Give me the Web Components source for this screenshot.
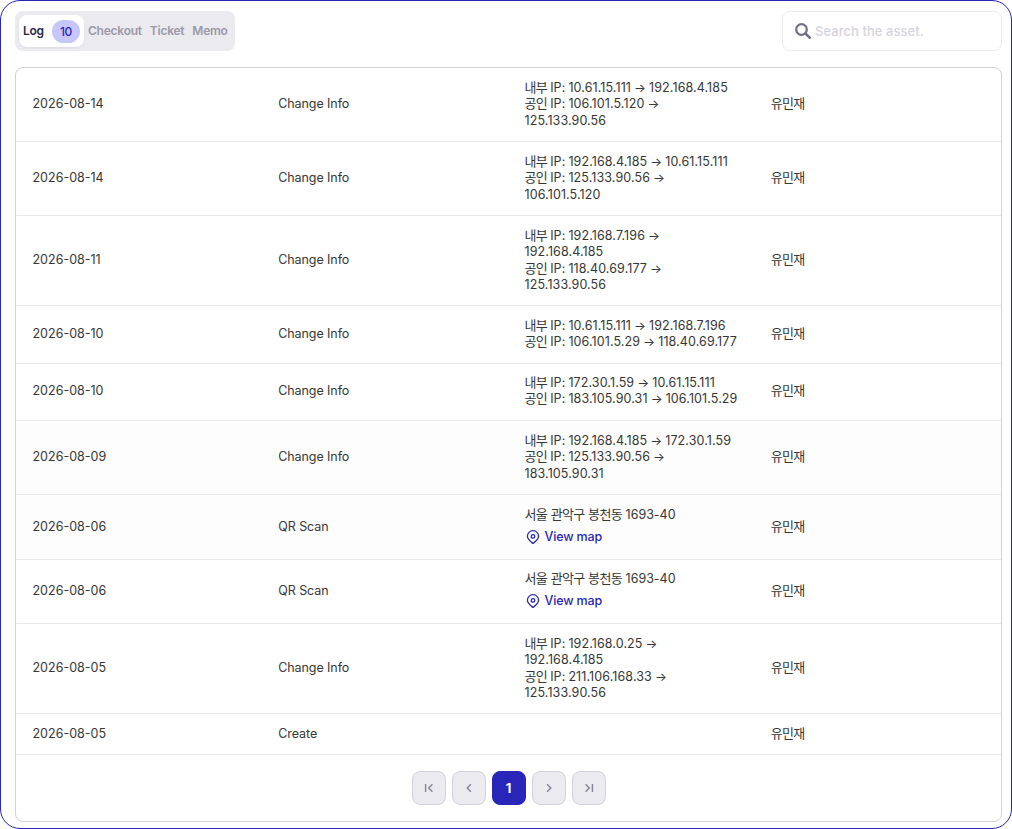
<!DOCTYPE html>
<html lang="en">
<head>
<meta charset="utf-8">
<title>Asset log</title>
<style>
	:root{
		--primary:#2925b8;
		--panel:#ebeaef;
		--border:#d1d1d6;
		--row-border:#e9e9ec;
		--text:#363636;
		--muted:#9b98aa;
		--icon:#706e88;
	}
	html, body{
		height:100%;
		margin:0;
		background:#fff;
	}
	body{
		font-family:Inter, "Noto Sans CJK KR", sans-serif;
		font-size:12.5px;
		line-height:16.25px;
		color:var(--text);
	}
</style>
</head>
<body>

<asset-panel>
	<tab-bar slot="left">
		<tab-item active count="10">Log</tab-item>
		<tab-item>Checkout</tab-item>
		<tab-item>Ticket</tab-item>
		<tab-item>Memo</tab-item>
	</tab-bar>
	<search-box slot="right" placeholder="Search the asset."></search-box>
	<log-table></log-table>
</asset-panel>

<script>

//component asset-panel
window.customElements.define('asset-panel',
	class extends HTMLElement {
		template() {
			return `
			<style>
				:host{
					display:flex;
					flex-direction:column;
					gap:16px;
					box-sizing:border-box;
					height:829px;
					padding:10px 9px 6px 14px;
					border:1px solid var(--primary);
					border-radius:20px;
				}
				.head{
					display:flex;
					justify-content:space-between;
					height:40px;
				}
				::slotted(log-table){
					flex:1;
				}
			</style>
			<div class="head">
				<slot name="left"></slot>
				<slot name="right"></slot>
			</div>
			<slot></slot>
			`
		}

		constructor() {
			super()
			this.attachShadow({ mode: "open" })
			this.shadowRoot.innerHTML = this.template()
		}
	}
)

//component tab-bar
window.customElements.define('tab-bar',
	class extends HTMLElement {
		template() {
			return `
			<style>
				:host{
					display:flex;
					box-sizing:border-box;
					width:220px;
					height:40px;
					padding:4px;
					border-radius:8px;
					background:var(--panel);
				}
			</style>
			<slot></slot>
			`
		}

		constructor() {
			super()
			this.attachShadow({ mode: "open" })
			this.shadowRoot.innerHTML = this.template()
		}
	}
)

//component tab-item
window.customElements.define('tab-item',
	class extends HTMLElement {
		template() {
			return `
			<style>
				:host{
					display:flex;
					flex:none;
					align-items:center;
					justify-content:space-between;
					box-sizing:border-box;
					height:32px;
					padding:0 4px;
					border-radius:8px;
					color:var(--muted);
					font-size:12px;
					font-weight:600;
					letter-spacing:-.24px;
					white-space:nowrap;
				}
				:host([active]){
					width:65px;
					color:#29274a;
					background:#fff;
					box-shadow:0 1px 2px rgba(40,38,80,.08);
				}
				.count{
					width:28px;
					height:23px;
					border-radius:12px;
					background:#c7c6fa;
					color:var(--primary);
					font-weight:500;
					line-height:23px;
					text-align:center;
				}
			</style>
			<slot></slot>
			${this.hasAttribute('count') ? `<span class="count">${this.getAttribute('count')}</span>` : ''}
			`
		}

		constructor() {
			super()
			this.attachShadow({ mode: "open" })
			this.shadowRoot.innerHTML = this.template()
		}
	}
)

//component search-box
window.customElements.define('search-box',
	class extends HTMLElement {
		template() {
			return `
			<style>
				:host{
					display:flex;
					align-items:center;
					gap:4px;
					box-sizing:border-box;
					width:220px;
					height:40px;
					padding:0 12px;
					border:1px solid var(--panel);
					border-radius:8px;
					color:#d5d3dc;
					font-size:13px;
					font-weight:500;
					letter-spacing:.05px;
				}
				svg{
					flex:none;
					width:16px;
					height:16px;
					fill:none;
					stroke:var(--icon);
				}
			</style>
			<svg viewBox="0 0 16 16">
				<circle cx="6.5" cy="6.5" r="5.3" stroke-width="2.2"/>
				<path d="M10.6 10.6L14.7 14.7" stroke-width="2.6" stroke-linecap="round"/>
			</svg>
			<span class="text">${this.getAttribute('placeholder')}</span>
			`
		}

		constructor() {
			super()
			this.attachShadow({ mode: "open" })
			this.shadowRoot.innerHTML = this.template()
		}
	}
)

//component map-link
window.customElements.define('map-link',
	class extends HTMLElement {
		template() {
			return `
			<style>
				:host{
					display:flex;
					align-items:center;
					gap:4px;
					height:19.25px;
					margin-top:4px;
					color:var(--primary);
					font-weight:500;
					letter-spacing:-.15px;
				}
				svg{
					width:16px;
					height:16px;
					fill:none;
					stroke:currentColor;
					stroke-width:1.3;
					stroke-linejoin:round;
				}
			</style>
			<svg viewBox="0 0 16 16">
				<path d="M8 14.4C6.2 12.9 2.4 10.6 2.4 7.3A5.6 5.6 0 0 1 13.6 7.3C13.6 10.6 9.8 12.9 8 14.4Z"/>
				<circle cx="8" cy="7.4" r="1.8"/>
			</svg>
			<slot></slot>
			`
		}

		constructor() {
			super()
			this.attachShadow({ mode: "open" })
			this.shadowRoot.innerHTML = this.template()
		}
	}
)

//component log-row
window.customElements.define('log-row',
	class extends HTMLElement {
		template() {
			return `
			<style>
				:host{
					display:grid;
					grid-template-columns:repeat(4, 1fr);
					align-items:center;
					box-sizing:border-box;
					border-bottom:1px solid var(--row-border);
				}
				:host([shade]){
					background:#fdfdfd;
				}
				.cell{
					min-width:0;
					padding:.1px 16px var(--lift, 0px);
					white-space:nowrap;
				}
				.date{
					padding-left:16.5px;
				}
				.type{
					letter-spacing:-.08px;
				}
			</style>
			<div class="cell date"><slot name="date"></slot></div>
			<div class="cell type"><slot name="type"></slot></div>
			<div class="cell"><slot></slot></div>
			<div class="cell"><slot name="user"></slot></div>
			`
		}

		constructor() {
			super()
			this.attachShadow({ mode: "open" })
			this.shadowRoot.innerHTML = this.template()
		}
	}
)

//component page-nav
window.customElements.define('page-nav',
	class extends HTMLElement {
		template() {
			return `
			<style>
				:host{
					display:flex;
					justify-content:center;
					gap:6px;
					padding-top:16px;
				}
				.page{
					display:flex;
					align-items:center;
					justify-content:center;
					box-sizing:border-box;
					width:34px;
					height:34px;
					padding:0;
					border:1px solid #d4d2db;
					border-radius:8px;
					background:var(--panel);
					color:#858297;
				}
				.page.active{
					border-color:var(--primary);
					background:var(--primary);
					color:#fff;
					font:700 13px/16px Inter, sans-serif;
				}
				svg{
					width:16px;
					height:16px;
					fill:none;
					stroke:currentColor;
					stroke-width:1.4;
				}
			</style>
			<button class="page"><svg viewBox="0 0 16 16"><path d="M4.6 4V12M11.4 4.3L7.7 8L11.4 11.7"/></svg></button>
			<button class="page"><svg viewBox="0 0 16 16"><path d="M9.9 4.3L6.2 8L9.9 11.7"/></svg></button>
			<button class="page active">1</button>
			<button class="page"><svg viewBox="0 0 16 16"><path d="M6.1 4.3L9.8 8L6.1 11.7"/></svg></button>
			<button class="page"><svg viewBox="0 0 16 16"><path d="M11.4 4V12M4.6 4.3L8.3 8L4.6 11.7"/></svg></button>
			`
		}

		constructor() {
			super()
			this.attachShadow({ mode: "open" })
			this.shadowRoot.innerHTML = this.template()
		}
	}
)

//component log-table
window.customElements.define('log-table',
	class extends HTMLElement {
		rows() {
			return [
				{ h: 74, date: '2026-08-14', type: 'Change Info', lines: ['내부 IP: 10.61.15.111 → 192.168.4.185', '공인 IP: 106.101.5.120 →', '125.133.90.56'] },
				{ h: 74, date: '2026-08-14', type: 'Change Info', lines: ['내부 IP: 192.168.4.185 → 10.61.15.111', '공인 IP: 125.133.90.56 →', '106.101.5.120'] },
				{ h: 90, date: '2026-08-11', type: 'Change Info', lines: ['내부 IP: 192.168.7.196 →', '192.168.4.185', '공인 IP: 118.40.69.177 →', '125.133.90.56'] },
				{ h: 58, lift: 1, date: '2026-08-10', type: 'Change Info', lines: ['내부 IP: 10.61.15.111 → 192.168.7.196', '공인 IP: 106.101.5.29 → 118.40.69.177'] },
				{ h: 57, lift: 2, date: '2026-08-10', type: 'Change Info', lines: ['내부 IP: 172.30.1.59 → 10.61.15.111', '공인 IP: 183.105.90.31 → 106.101.5.29'] },
				{ h: 74, shade: true, date: '2026-08-09', type: 'Change Info', lines: ['내부 IP: 192.168.4.185 → 172.30.1.59', '공인 IP: 125.133.90.56 →', '183.105.90.31'] },
				{ h: 65, shade: true, map: true, date: '2026-08-06', type: 'QR Scan', lines: ['서울 관악구 봉천동 1693-40'] },
				{ h: 64, lift: 1, map: true, date: '2026-08-06', type: 'QR Scan', lines: ['서울 관악구 봉천동 1693-40'] },
				{ h: 90, date: '2026-08-05', type: 'Change Info', lines: ['내부 IP: 192.168.0.25 →', '192.168.4.185', '공인 IP: 211.106.168.33 →', '125.133.90.56'] },
				{ h: 41, date: '2026-08-05', type: 'Create', lines: [] },
			]
		}

		// hangul is set a little tighter than the latin text
		ko(text) {
			return text.replace(/[가-힣]+/g, s => `<span class="ko">${s}</span>`)
		}

		row({ h, lift = 0, shade, map, date, type, lines }) {
			return `
			<log-row ${shade ? 'shade' : ''} style="height:${h}px;--lift:${lift}px">
				<span slot="date">${date}</span>
				<span slot="type">${type}</span>
				${lines.map(l => `<div class="line ${map ? '' : 'ip'}">${this.ko(l)}</div>`).join('')}
				${map ? '<map-link>View map</map-link>' : ''}
				<span slot="user">${this.ko('유민재')}</span>
			</log-row>
			`
		}

		template() {
			return `
			<style>
				:host{
					display:block;
					box-sizing:border-box;
					border:1px solid var(--border);
					border-radius:8px;
					overflow:hidden;
				}
				.line{
					height:16.4px;
				}
				.ip{
					letter-spacing:.1px;
					word-spacing:-.6px;
				}
				.ko{
					font-size:13px;
					letter-spacing:-.65px;
					line-height:1;
				}
			</style>
			${this.rows().map(r => this.row(r)).join('')}
			<page-nav></page-nav>
			`
		}

		constructor() {
			super()
			this.attachShadow({ mode: "open" })
			this.shadowRoot.innerHTML = this.template()
		}
	}
)

</script>
</body>
</html>
